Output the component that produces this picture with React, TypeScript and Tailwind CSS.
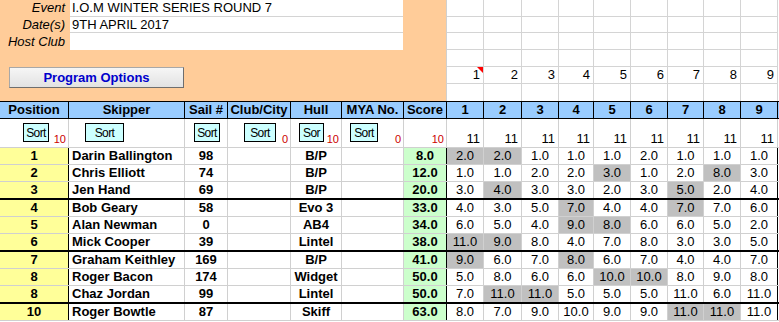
import React from 'react';

const colW = ['w-[69px]', 'w-[116px]', 'w-[43px]', 'w-[63px]', 'w-[51px]', 'w-[62px]', 'w-[43px]'];
const raceW = ['w-[37px]', 'w-[38px]', 'w-[37px]', 'w-[35px]', 'w-[37px]', 'w-[37px]', 'w-[36px]', 'w-[37px]', 'w-[37px]'];
const headers = ['Position', 'Skipper', 'Sail #', 'Club/City', 'Hull', 'MYA No.', 'Score'];

type Sort = { ml?: string; w?: string; label?: string; red?: string };

const sorts: Sort[] = [
  { ml: 'ml-[23px]', w: 'w-[26px]', label: 'Sort', red: '10' },
  { ml: 'ml-[16px]', w: 'w-[39px]', label: 'Sort' },
  { ml: 'ml-[9px]', w: 'w-[26px]', label: 'Sort' },
  { ml: 'ml-[16px]', w: 'w-[32px]', label: 'Sort', red: '0' },
  { ml: 'ml-[8px]', w: 'w-[25px]', label: 'Sor', red: '10' },
  { ml: 'ml-[8px]', w: 'w-[28px]', label: 'Sort', red: '0' },
  { red: '10' },
];

type Row = { pos: number; name: string; sail: number; hull: string; score: string; races: number[]; dropped: number[] };

const rows: Row[] = [
  { pos: 1, name: 'Darin Ballington', sail: 98, hull: 'B/P', score: '8.0', races: [2, 2, 1, 1, 1, 2, 1, 1, 1], dropped: [0, 1] },
  { pos: 2, name: 'Chris Elliott', sail: 74, hull: 'B/P', score: '12.0', races: [1, 1, 2, 2, 3, 1, 2, 8, 3], dropped: [4, 7] },
  { pos: 3, name: 'Jen Hand', sail: 69, hull: 'B/P', score: '20.0', races: [3, 4, 3, 3, 2, 3, 5, 2, 4], dropped: [1, 6] },
  { pos: 4, name: 'Bob Geary', sail: 58, hull: 'Evo 3', score: '33.0', races: [4, 3, 5, 7, 4, 4, 7, 7, 6], dropped: [3, 6] },
  { pos: 5, name: 'Alan Newman', sail: 0, hull: 'AB4', score: '34.0', races: [6, 5, 4, 9, 8, 6, 6, 5, 2], dropped: [3, 4] },
  { pos: 6, name: 'Mick Cooper', sail: 39, hull: 'Lintel', score: '38.0', races: [11, 9, 8, 4, 7, 8, 3, 3, 5], dropped: [0, 1] },
  { pos: 7, name: 'Graham Keithley', sail: 169, hull: 'B/P', score: '41.0', races: [9, 6, 7, 8, 6, 7, 4, 4, 7], dropped: [0, 3] },
  { pos: 8, name: 'Roger Bacon', sail: 174, hull: 'Widget', score: '50.0', races: [5, 8, 6, 6, 10, 10, 8, 9, 8], dropped: [4, 5] },
  { pos: 8, name: 'Chaz Jordan', sail: 99, hull: 'Lintel', score: '50.0', races: [7, 11, 11, 5, 5, 5, 11, 6, 11], dropped: [1, 2] },
  { pos: 10, name: 'Roger Bowtle', sail: 87, hull: 'Skiff', score: '63.0', races: [8, 7, 9, 10, 9, 9, 11, 11, 11], dropped: [6, 7] },
];

const topRows = ['h-[17px] border-b', 'h-[16px] border-b', 'h-[17px] border-b', 'h-[17px] border-b', 'h-[17px] border-b', 'h-[17px]'];

function EventPanel() {
  const labels = ['Event', 'Date(s)', 'Host Club'];
  const values = ['I.O.M WINTER SERIES ROUND 7', '9TH APRIL 2017', ''];
  const heights = ['h-[17px] border-b', 'h-[16px] border-b', 'h-[17px]'];
  return (
    <div className="w-[447px] h-[101px] bg-[#ffcc99] border-r border-[#d0d0d0] flex flex-col">
      <div className="flex">
        <div className="w-[70px] flex flex-col">
          {labels.map((l, i) => (
            <div key={l} className={`${heights[i]} border-transparent flex items-center justify-end pr-[5px] italic text-[13px]`}>
              {l}
            </div>
          ))}
        </div>
        <div className="w-[333px] bg-white flex flex-col">
          {values.map((v, i) => (
            <div key={i} className={`${heights[i]} border-[#d4d4d4] flex items-center pl-[2px] text-[13px]`}>
              {v}
            </div>
          ))}
        </div>
      </div>
      <button className="mt-[17px] ml-[9px] w-[175px] h-[21px] bg-gradient-to-b from-[#f6f6f6] to-[#e2e2e2] border border-[#a8a8a8] border-b-[#6e6e6e] border-r-[#6e6e6e] text-[#0000cc] font-bold text-[13px] leading-none">
        Program Options
      </button>
    </div>
  );
}

function TopGrid() {
  return (
    <div className="flex flex-col">
      {topRows.map((h, r) => (
        <div key={r} className={`flex ${h} border-[#d4d4d4]`}>
          {raceW.map((w, c) => (
            <div key={c} className={`${w} h-full border-r border-[#d4d4d4] relative flex items-center justify-end pr-[3px] text-[13px]`}>
              {r === 4 && c + 1}
              {r === 4 && c === 0 && (
                <span className="absolute top-0 right-0 w-0 h-0 border-t-[6px] border-t-[#ff0000] border-l-[6px] border-l-transparent" />
              )}
            </div>
          ))}
        </div>
      ))}
    </div>
  );
}

export default function App() {
  return (
    <div className="w-[779px] h-[322px] bg-white overflow-hidden font-['Liberation_Sans',Arial,sans-serif] text-black">
      <div className="flex">
        <EventPanel />
        <TopGrid />
      </div>

      {/* header row */}
      <div className="flex h-[18px] border-y border-black bg-[#99ccff]">
        {headers.map((h, i) => (
          <div key={h} className={`${colW[i]} border-r border-black flex items-center justify-center font-bold text-[13px]`}>
            {h}
          </div>
        ))}
        {raceW.map((w, i) => (
          <div key={i} className={`${w} border-r border-black flex items-center justify-center font-bold text-[13px]`}>
            {i + 1}
          </div>
        ))}
      </div>

      {/* sort row */}
      <div className="flex h-[29px] border-b border-[#d0d0d0]">
        {sorts.map((s, i) => (
          <div key={i} className={`${colW[i]} border-r border-[#d0d0d0] flex`}>
            {s.label && (
              <div className={`${s.ml} ${s.w} mt-[4px] h-[19px] bg-[#ccffff] border border-black flex items-center justify-center overflow-hidden text-[12px] tracking-[-0.6px]`}>
                {s.label}
              </div>
            )}
            {s.red && (
              <div className="ml-auto self-end pb-[1px] pr-[2px] text-[11px] leading-[13px] text-[#cc0000]">{s.red}</div>
            )}
          </div>
        ))}
        {raceW.map((w, i) => (
          <div key={i} className={`${w} border-r border-[#d0d0d0] flex items-end justify-end pr-[3px] pb-[1px] text-[13px] leading-[15px]`}>
            11
          </div>
        ))}
      </div>

      {/* results */}
      {rows.map((r, ri) => {
        const thick = ri === 2 || ri === 5 || ri === 8;
        return (
          <div key={ri} className={`flex ${thick ? 'h-[18px] border-b-2 border-black' : 'h-[17px] border-b border-[#d0d0d0]'} text-[13px]`}>
            <div className={`${colW[0]} bg-[#ffff99] border-r border-black flex items-center justify-center font-bold`}>{r.pos}</div>
            <div className={`${colW[1]} border-r border-[#d0d0d0] flex items-center pl-[3px] font-bold whitespace-nowrap`}>{r.name}</div>
            <div className={`${colW[2]} border-r border-[#d0d0d0] flex items-center justify-center font-bold`}>{r.sail}</div>
            <div className={`${colW[3]} border-r border-[#d0d0d0]`} />
            <div className={`${colW[4]} border-r border-[#d0d0d0] flex items-center justify-center font-bold`}>{r.hull}</div>
            <div className={`${colW[5]} border-r border-[#d0d0d0]`} />
            <div className={`${colW[6]} bg-[#ccffcc] border-r border-black flex items-center justify-center font-bold`}>{r.score}</div>
            {r.races.map((v, i) => (
              <div
                key={i}
                className={`${raceW[i]} border-r ${i === 8 ? 'border-black' : 'border-[#d0d0d0]'} ${r.dropped.includes(i) ? 'bg-[#c0c0c0]' : ''} flex items-center justify-center`}
              >
                {v.toFixed(1)}
              </div>
            ))}
          </div>
        );
      })}
    </div>
  );
}
